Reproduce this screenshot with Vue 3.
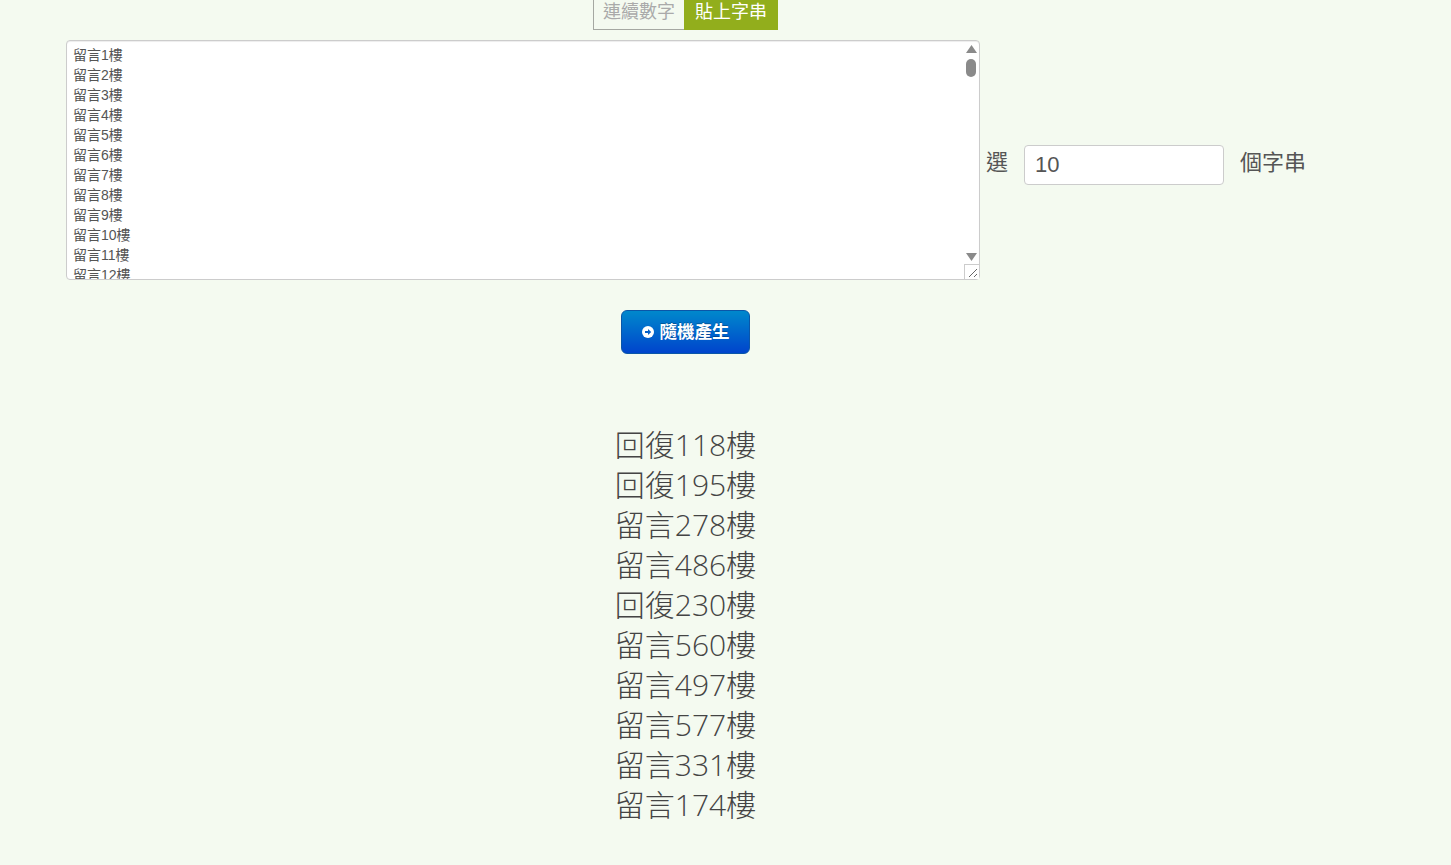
<script setup>
const lines = Array.from({ length: 600 }, (_, i) => `留言${i + 1}樓`).join('\n')
const results = ['回復118樓', '回復195樓', '留言278樓', '留言486樓', '回復230樓', '留言560樓', '留言497樓', '留言577樓', '留言331樓', '留言174樓']
</script>

<template>
  <div class="page">
    <nav class="tabs">
      <a class="tab off">連續數字</a>
      <a class="tab on">貼上字串</a>
    </nav>
    <section class="row">
      <div class="box">
        <textarea class="area" readonly :value="lines"></textarea>
        <div class="bar">
          <svg class="arrow up" width="11" height="8" viewBox="0 0 11 8"><path d="M5.5 0L11 8H0Z" fill="#8a8a8a"/></svg>
          <span class="thumb"></span>
          <svg class="arrow down" width="11" height="8" viewBox="0 0 11 8"><path d="M0 0H11L5.5 8Z" fill="#8a8a8a"/></svg>
        </div>
        <div class="grip">
          <svg width="15" height="15" viewBox="0 0 15 15"><path d="M5 13L13 5M10 13L13 10" stroke="#666" stroke-width="1" fill="none"/></svg>
        </div>
      </div>
      <label class="pick">選</label>
      <input class="num" value="10" />
      <span class="unit">個字串</span>
    </section>
    <div class="action">
      <button class="go">
        <svg width="12" height="12" viewBox="0 0 12 12"><circle cx="6" cy="6" r="6" fill="#fff"/><path d="M3 5H6V3L9.2 6L6 9V7H3Z" fill="#0560c8"/></svg>
        <span class="go-text">隨機產生</span>
      </button>
    </div>
    <ul class="results">
      <li v-for="(r, i) in results" :key="i">{{ r }}</li>
    </ul>
  </div>
</template>

<style scoped>
.page {
  box-sizing: border-box;
  height: 865px;
  padding-right: 80px;
  overflow: hidden;
  background: #f4faf0;
  color: #555;
  font-family: "Liberation Sans", "Noto Sans CJK TC", sans-serif;
}
.tabs {
  display: flex;
  justify-content: center;
  height: 30px;
  font-size: 18px;
  line-height: 25px;
}
.tab {
  box-sizing: border-box;
  height: 30px;
  text-align: center;
}
.off {
  width: 91px;
  color: #aaa;
  border: 1px solid #a5a8a2;
  border-top: 0;
  border-right: 0;
}
.on {
  width: 94px;
  color: #fff;
  background: #92ae1c;
}
.row {
  display: flex;
  align-items: center;
  height: 240px;
  margin-top: 10px;
  padding-left: 66px;
}
.box {
  position: relative;
  flex: none;
  width: 914px;
  height: 240px;
}
.area {
  display: block;
  box-sizing: border-box;
  width: 100%;
  height: 100%;
  margin: 0;
  padding: 4px 6px;
  overflow: hidden;
  resize: none;
  outline: 0;
  border: 1px solid #ccc;
  border-radius: 4px;
  background: #fff;
  color: #555;
  box-shadow: inset 0 1px 1px rgba(0, 0, 0, .075);
  font: 14px/20px "Liberation Sans", "Noto Sans CJK TC", sans-serif;
}
.bar {
  position: absolute;
  top: 1px;
  right: 1px;
  bottom: 1px;
  width: 15px;
}
.arrow {
  position: absolute;
  left: 2px;
}
.up { top: 4px; }
.down { bottom: 18px; }
.thumb {
  position: absolute;
  top: 18px;
  left: 2px;
  width: 10px;
  height: 18px;
  border-radius: 5px;
  background: #8a8a8a;
}
.grip {
  position: absolute;
  right: 1px;
  bottom: 1px;
  width: 15px;
  height: 15px;
  box-sizing: border-box;
  background: #fff;
  border-top: 1px solid #ccc;
  border-left: 1px solid #ccc;
  line-height: 0;
}
.grip svg { margin: -1px 0 0 -1px; }
.pick {
  flex: none;
  margin-left: 6px;
  padding-top: 7px;
  font-size: 22px;
  line-height: 1.1;
}
.num {
  flex: none;
  box-sizing: border-box;
  width: 200px;
  height: 40px;
  margin: 9px 0 0 16px;
  padding: 0 10px;
  border: 1px solid #ccc;
  border-radius: 4px;
  background: #fff;
  color: #555;
  outline: 0;
  font: 22px "Liberation Sans", sans-serif;
}
.unit {
  flex: none;
  margin-left: 16px;
  padding-top: 7px;
  font-size: 22px;
  line-height: 1.1;
}
.action {
  display: flex;
  justify-content: center;
  margin-top: 30px;
}
.go {
  display: flex;
  align-items: center;
  justify-content: center;
  gap: 6px;
  box-sizing: border-box;
  width: 129px;
  height: 44px;
  padding: 0;
  border: 1px solid #0a56a8;
  border-radius: 6px;
  background: linear-gradient(#0088cc, #0044cc);
  color: #fff;
  font: bold 17.5px "Liberation Sans", "Noto Sans CJK TC", sans-serif;
  text-shadow: 0 -1px 0 rgba(0, 0, 0, .25);
}
.go-text {
  padding-bottom: 4px;
}
.results {
  margin: 71px 0 0;
  padding: 0;
  list-style: none;
  text-align: center;
  color: #444;
  font: 300 30px/40px "Open Sans", "Noto Sans CJK TC", sans-serif;
}
</style>
